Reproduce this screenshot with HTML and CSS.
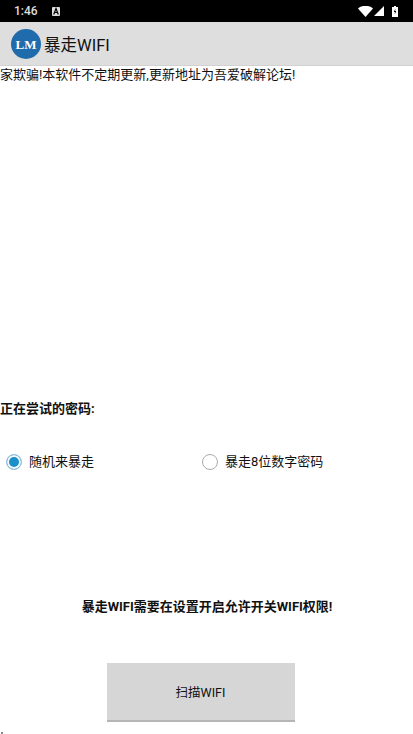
FILE: index.html
```html
<!DOCTYPE html>
<html lang="zh-CN">

<head>
    <meta charset="UTF-8">
    <meta name="viewport" content="width=device-width, initial-scale=1.0">
    <title>暴走WIFI</title>
    <link rel="stylesheet" href="styles.css">
</head>

<body>
    <div class="status-bar">
        <span class="clock">1:46</span>
        <svg class="notify-icon" width="8" height="9" viewBox="0 0 8 9">
            <rect width="8" height="9" rx="1" fill="#ddd"/>
            <path d="M1.7 7.5 4 1.5 6.3 7.5M2.6 5.5H5.4" fill="none" stroke="#000" stroke-width="1.2"/>
        </svg>
        <span class="spacer"></span>
        <svg width="15" height="11" viewBox="0 0 15 11"><path d="M0 2.5C4-1 11-1 15 2.5L7.5 11Z" fill="#fff"/></svg>
        <svg class="signal-icon" width="10" height="10" viewBox="0 0 10 10"><path d="M10 0V10H0Z" fill="#fff"/></svg>
        <svg class="battery-icon" width="6" height="11" viewBox="0 0 6 11">
            <path d="M2 0H4V1H6V11H0V1H2Z" fill="#fff"/>
            <path d="M3.4 2.5 1.8 6H3L2.6 8.8 4.3 5H3.1Z" fill="#000"/>
        </svg>
    </div>

    <div class="app-bar">
        <svg class="logo" width="30" height="30" viewBox="0 0 30 30">
            <circle cx="15" cy="15" r="15" fill="#1f6bab"/>
            <text x="15" y="19.5" text-anchor="middle" class="logo-text">LM</text>
        </svg>
        <span class="app-title">暴走WIFI</span>
    </div>

    <main class="content">
        <p class="notice">家欺骗!本软件不定期更新,更新地址为吾爱破解论坛!</p>
        <p class="password-label">正在尝试的密码:</p>

        <div class="radio-group">
            <label class="radio-item">
                <span class="radio radio-checked"></span>
                <span>随机来暴走</span>
            </label>
            <label class="radio-item">
                <span class="radio"></span>
                <span>暴走8位数字密码</span>
            </label>
        </div>

        <p class="permission">暴走WIFI需要在设置开启允许开关WIFI权限!</p>

        <div class="actions">
            <button class="scan-button">扫描WIFI</button>
        </div>
    </main>

    <span class="corner-speck"></span>
</body>

</html>
```

FILE: styles.css
```css
html,
body {
    height: 100%;
}

body {
    margin: 0;
    background-color: #fff;
    color: #111;
    font-family: Roboto, "Noto Sans CJK SC", sans-serif;
    font-size: 13px;
    overflow: hidden;
}

p {
    margin: 0;
}

.status-bar {
    display: flex;
    align-items: center;
    height: 22px;
    padding: 0 15px 0 14px;
    background-color: #000;
    color: #ddd;
}

.clock {
    font-size: 12px;
    font-weight: 500;
}

.notify-icon {
    margin-left: 14px;
}

.spacer {
    flex: 1;
}

.signal-icon {
    margin-left: 1px;
}

.battery-icon {
    margin-left: 8px;
}

.app-bar {
    display: flex;
    align-items: center;
    height: 43px;
    padding-left: 11px;
    background-color: #dedede;
    border-bottom: 1px solid #d2d2d2;
}

.logo-text {
    fill: #fff;
    font-family: "Liberation Serif", serif;
    font-size: 13px;
    font-weight: bold;
}

.app-title {
    margin-left: 3px;
    font-size: 16.5px;
}

.notice {
    height: 329px;
    padding-top: 1px;
    line-height: 16px;
}

.password-label {
    font-weight: bold;
    line-height: 16px;
    margin-top: 5px;
}

.radio-group {
    display: flex;
    margin-top: 31px;
    padding-left: 6px;
}

.radio-item {
    display: flex;
    align-items: center;
    width: 196px;
    gap: 7px;
    height: 24px;
}

.radio {
    box-sizing: border-box;
    width: 16px;
    height: 16px;
    margin-top: 4px;
    border: 1px solid #aaa;
    border-radius: 50%;
}

.radio-checked {
    border-color: #9cc3da;
    background-color: #1a8fc9;
    box-shadow: inset 0 0 0 2px #f4f8fb;
}

.permission {
    margin-top: 126px;
    padding-left: 1px;
    text-align: center;
    font-weight: bold;
    line-height: 18px;
}

.actions {
    display: flex;
    justify-content: center;
    margin-top: 47px;
    padding-right: 12px;
}

.scan-button {
    width: 188px;
    height: 59px;
    padding: 0;
    border: 0;
    border-bottom: 2px solid #b5b5b5;
    background-color: #d6d6d6;
    color: #111;
    font-family: inherit;
    font-size: 12.5px;
}

.corner-speck {
    position: absolute;
    left: 1px;
    bottom: 0;
    width: 2px;
    height: 2px;
    background-color: #888;
}
```
